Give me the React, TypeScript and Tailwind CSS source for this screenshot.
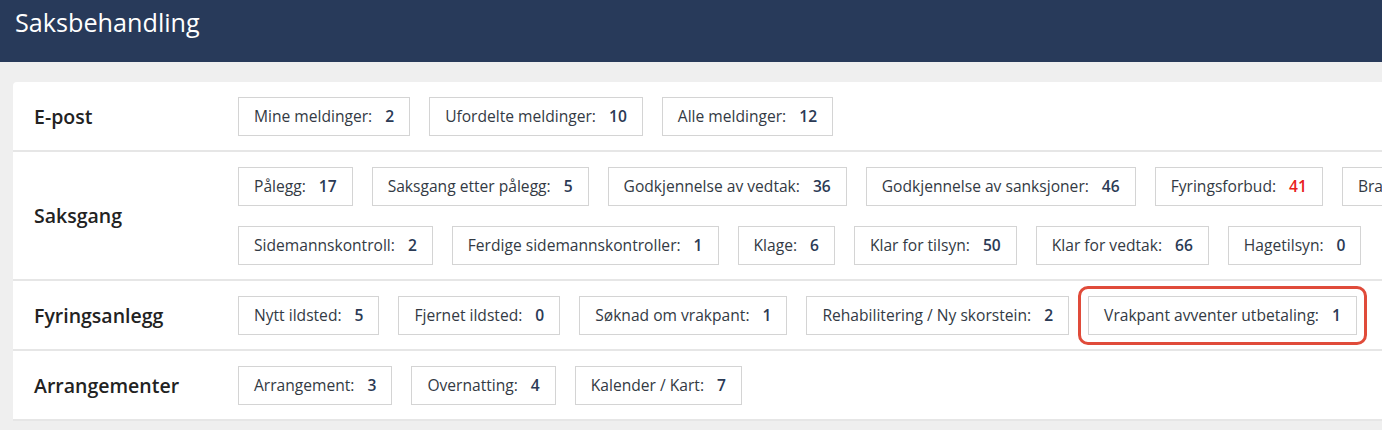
type Item = { label: string; count: number; alert?: boolean; marked?: boolean };

type Section = { title: string; rows: Item[][] };

const sections: Section[] = [
  {
    title: "E-post",
    rows: [
      [
        { label: "Mine meldinger:", count: 2 },
        { label: "Ufordelte meldinger:", count: 10 },
        { label: "Alle meldinger:", count: 12 },
      ],
    ],
  },
  {
    title: "Saksgang",
    rows: [
      [
        { label: "Pålegg:", count: 17 },
        { label: "Saksgang etter pålegg:", count: 5 },
        { label: "Godkjennelse av vedtak:", count: 36 },
        { label: "Godkjennelse av sanksjoner:", count: 46 },
        { label: "Fyringsforbud:", count: 41, alert: true },
        { label: "Branntilsyn:", count: 3 },
      ],
      [
        { label: "Sidemannskontroll:", count: 2 },
        { label: "Ferdige sidemannskontroller:", count: 1 },
        { label: "Klage:", count: 6 },
        { label: "Klar for tilsyn:", count: 50 },
        { label: "Klar for vedtak:", count: 66 },
        { label: "Hagetilsyn:", count: 0 },
      ],
    ],
  },
  {
    title: "Fyringsanlegg",
    rows: [
      [
        { label: "Nytt ildsted:", count: 5 },
        { label: "Fjernet ildsted:", count: 0 },
        { label: "Søknad om vrakpant:", count: 1 },
        { label: "Rehabilitering / Ny skorstein:", count: 2 },
        { label: "Vrakpant avventer utbetaling:", count: 1, marked: true },
      ],
    ],
  },
  {
    title: "Arrangementer",
    rows: [
      [
        { label: "Arrangement:", count: 3 },
        { label: "Overnatting:", count: 4 },
        { label: "Kalender / Kart:", count: 7 },
      ],
    ],
  },
];

function CountButton({ item }: { item: Item }) {
  const button = (
    <button
      type="button"
      className="flex h-[39px] shrink-0 items-center whitespace-nowrap border border-[#d4d4d4] bg-white px-[15px] text-[15.6px] text-[#333a44] hover:bg-gray-50"
    >
      {item.label}
      <span
        className={
          item.alert
            ? "ml-[13px] font-semibold text-[#e8201c]"
            : "ml-[13px] font-semibold text-[#2b3a55]"
        }
      >
        {item.count}
      </span>
    </button>
  );

  if (!item.marked) return button;

  // rød markering rundt knappen
  return (
    <div className="relative shrink-0">
      {button}
      <span className="pointer-events-none absolute -inset-[10px] rounded-[10px] border-[3px] border-[#e04b3a]" />
    </div>
  );
}

export default function App() {
  return (
    <div
      className="min-h-[430px] w-[1382px] overflow-hidden bg-[#efefef]"
      style={{ fontFamily: '"Open Sans", "Noto Sans", sans-serif' }}
    >
      <header className="h-[62px] bg-[#283a5a] pl-[15px] pt-[5px]">
        <h1 className="text-[25.2px] leading-[34px] text-white">Saksbehandling</h1>
      </header>

      <main className="pl-[13px] pt-[20px]">
        <div className="w-[1500px] rounded-tl-[4px] bg-white">
          {sections.map((section) => (
            <div
              key={section.title}
              className="flex items-center border-b-2 border-[#e6e6e6] pb-[14px] pt-[15px]"
            >
              <div className="w-[225px] shrink-0 pl-[21px] text-[19.5px] font-semibold text-[#222]">
                {section.title}
              </div>
              <div className="flex flex-col gap-[20px]">
                {section.rows.map((row, i) => (
                  <div key={i} className="flex gap-[19px]">
                    {row.map((item) => (
                      <CountButton key={item.label} item={item} />
                    ))}
                  </div>
                ))}
              </div>
            </div>
          ))}
        </div>
      </main>
    </div>
  );
}
